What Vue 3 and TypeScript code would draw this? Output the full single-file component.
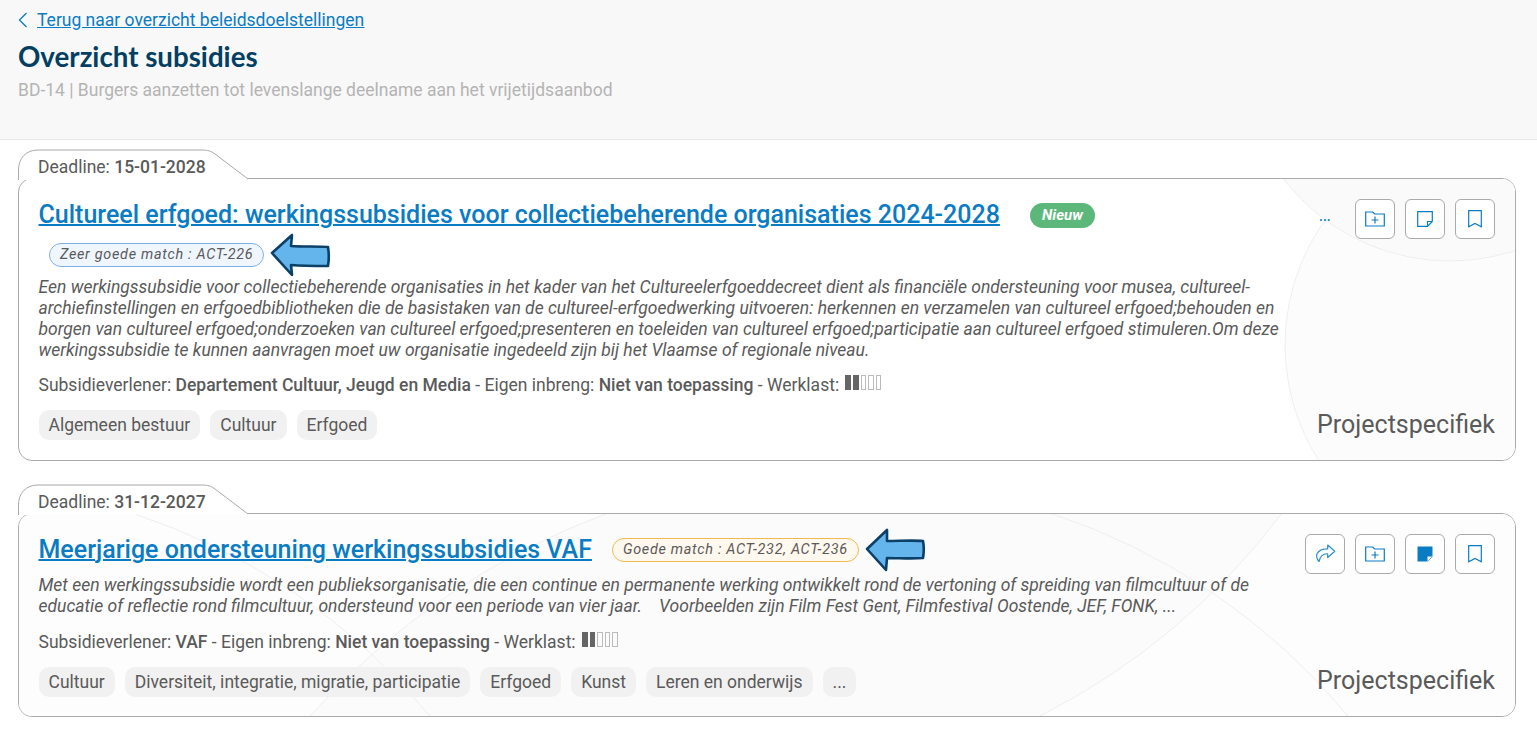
<script setup lang="ts">
interface Card {
  deadline: string
  title: string
  isNew?: boolean
  match: { text: string; kind: string }
  desc: string[]
  giver: string
  tags: string[]
  filledNote?: boolean
  share?: boolean
}
const cards: Card[] = [
  {
    deadline: '15-01-2028',
    title: 'Cultureel erfgoed: werkingssubsidies voor collectiebeherende organisaties 2024-2028',
    isNew: true,
    match: { text: 'Zeer goede match : ACT-226', kind: 'blue' },
    desc: [
      'Een werkingssubsidie voor collectiebeherende organisaties in het kader van het Cultureelerfgoeddecreet dient als financiële ondersteuning voor musea, cultureel-',
      'archiefinstellingen en erfgoedbibliotheken die de basistaken van de cultureel-erfgoedwerking uitvoeren: herkennen en verzamelen van cultureel erfgoed;behouden en',
      'borgen van cultureel erfgoed;onderzoeken van cultureel erfgoed;presenteren en toeleiden van cultureel erfgoed;participatie aan cultureel erfgoed stimuleren.Om deze',
      'werkingssubsidie te kunnen aanvragen moet uw organisatie ingedeeld zijn bij het Vlaamse of regionale niveau.',
    ],
    giver: 'Departement Cultuur, Jeugd en Media',
    tags: ['Algemeen bestuur', 'Cultuur', 'Erfgoed'],
  },
  {
    deadline: '31-12-2027',
    title: 'Meerjarige ondersteuning werkingssubsidies VAF',
    match: { text: 'Goede match : ACT-232, ACT-236', kind: 'orange' },
    desc: [
      'Met een werkingssubsidie wordt een publieksorganisatie, die een continue en permanente werking ontwikkelt rond de vertoning of spreiding van filmcultuur of de',
      'educatie of reflectie rond filmcultuur, ondersteund voor een periode van vier jaar.\u00a0\u00a0\u00a0 Voorbeelden zijn Film Fest Gent, Filmfestival Oostende, JEF, FONK, ...',
    ],
    giver: 'VAF',
    tags: ['Cultuur', 'Diversiteit, integratie, migratie, participatie', 'Erfgoed', 'Kunst', 'Leren en onderwijs', '...'],
    filledNote: true,
    share: true,
  },
]
</script>

<template>
  <div class="page">
    <header class="head">
      <a class="back" href="#">
        <svg class="chev" width="10" height="16" viewBox="0 0 10 16"><path d="M8.500 1 1.500 8l7 7" fill="none" stroke="#0a7cc4" stroke-width="1.300" /></svg>
        <span>Terug naar overzicht beleidsdoelstellingen</span>
      </a>
      <h1>Overzicht subsidies</h1>
      <p class="sub">BD-14 | Burgers aanzetten tot levenslange deelname aan het vrijetijdsaanbod</p>
    </header>

    <main class="list">
      <article v-for="(c, i) in cards" :key="i" class="item">
        <div class="tab">
          <svg class="tabshape" width="232" height="31" viewBox="0 0 232 31">
            <path d="M.5 31V21C.5 9 8 1 20 1H183C190 1 193 2 197 5L230 30" fill="#fff" stroke="#aaa" stroke-width="1" />
          </svg>
          <span class="tabtext">Deadline: <b>{{ c.deadline }}</b></span>
        </div>
        <div class="card" :class="{ second: c.share }">
          <svg v-if="!c.share" class="bg" width="1498" height="283" viewBox="0 0 1498 283">
            <circle cx="1482" cy="167" r="215" fill="#fcfcfc" stroke="#eee" />
            <circle cx="1432" cy="-127" r="210" fill="#fafafa" stroke="#eee" />
          </svg>
          <svg v-else class="bg" width="1498" height="204" viewBox="0 0 1498 204">
            <rect width="1498" height="204" fill="#fdfdfd" />
            <path d="M590 0A750 750 0 0 0 292 203H1022A700 700 0 0 0 1264 0Z" fill="#fbfbfb" />
            <path d="M590 0A750 750 0 0 0 292 203M1264 0A700 700 0 0 1 1022 203M1032 0A650 650 0 0 1 1330 203M114 0A650 650 0 0 1 412 203" fill="none" stroke="#eee" />
          </svg>

          <div class="main">
            <div class="titlerow">
              <a class="title" href="#">{{ c.title }}</a>
              <span v-if="c.isNew" class="new">Nieuw</span>
              <template v-if="c.share">
                <span class="match" :class="c.match.kind">{{ c.match.text }}</span>
                <svg class="arrow" width="62" height="44" viewBox="0 0 62 44"><path d="M2 21 22 2v11c12 0 26-1 36 0 1 5 1 11 0 17-12 1-24 0-36 0l-1 12z" fill="#64b5ec" stroke="#0b4068" stroke-width="2.600" stroke-linejoin="round" /></svg>
              </template>
            </div>
            <div v-if="!c.share" class="matchrow">
              <span class="match" :class="c.match.kind">{{ c.match.text }}</span>
              <svg class="arrow" width="62" height="44" viewBox="0 0 62 44"><path d="M2 20 22 2l-1 11c12 1 26 0 37 1 1 6 1 13 0 19-12 0-25 0-37-1l1 10z" fill="#64b5ec" stroke="#0b4068" stroke-width="2.600" stroke-linejoin="round" /></svg>
            </div>
            <p class="desc"><span v-for="(l, n) in c.desc" :key="n" class="line">{{ l }}</span></p>
            <p class="meta">
              Subsidieverlener: <b>{{ c.giver }}</b> - Eigen inbreng: <b>Niet van toepassing</b> - Werklast:
              <span class="load"><i class="on" /><i class="on" /><i /><i /><i /></span>
            </p>
            <div class="tags"><span v-for="t in c.tags" :key="t" class="tag">{{ t }}</span></div>
          </div>

          <div class="side">
            <div class="actions">
              <span v-if="!c.share" class="dots">...</span>
              <button v-if="c.share" class="btn" type="button">
                <svg width="22" height="20" viewBox="0 0 22 20"><path d="M13.700 1 20.800 7.300 13.700 13.500V9.800C9.500 9.500 6.500 11 5 17.500 .5 12.500 2 5 13.700 4.800Z" fill="none" stroke="#2a8fd0" stroke-width="1.200" stroke-linejoin="round" /></svg>
              </button>
              <button class="btn" type="button">
                <svg width="20" height="16" viewBox="0 0 20 16"><path d="M.7 1h7l2 2h9.600v12H.7zM10 5.500v7M6.500 9h7" fill="none" stroke="#0a7cc4" stroke-width="1.200" /></svg>
              </button>
              <button class="btn" type="button">
                <svg v-if="c.filledNote" width="16" height="16" viewBox="0 0 16 16"><path d="M.5.500H15.500V10.500H10.500V15.500H.5Z" fill="#0a7cc4" /><path d="M15.500 10.500 10.500 15.500" stroke="#7ab8e2" stroke-width="1" /></svg>
                <svg v-else width="16" height="16" viewBox="0 0 16 16"><path d="M.7.700h14.600v9.800l-4.800 4.800H.7zM15 10.500h-4.500V15" fill="none" stroke="#0a7cc4" stroke-width="1.200" /></svg>
              </button>
              <button class="btn" type="button">
                <svg width="14" height="18" viewBox="0 0 14 18"><path d="M.7.700h12.600v16L7 13.500.7 16.700z" fill="none" stroke="#0a7cc4" stroke-width="1.200" /></svg>
              </button>
            </div>
            <div class="kind">Projectspecifiek</div>
          </div>
        </div>
      </article>
    </main>
  </div>
</template>

<style>
html, body { margin: 0; background: #fff; }
</style>

<style scoped>
.page { width: 1537px; height: 730px; overflow: hidden; font-family: Roboto, sans-serif; color: #5a5a5a; }
.head { height: 140px; box-sizing: border-box; padding: 8px 18px 0; background: #f8f8f8; border-bottom: 1px solid #e8e8e8; }
.back { display: flex; align-items: center; gap: 9px; font-size: 17.5px; line-height: 24px; color: #0a7cc4; }
.back span { text-decoration: underline; }
.chev { flex: none; }
h1 { margin: 8px 0 0; font: 700 27.700px/34px Lato, sans-serif; color: #023f62; }
.sub { margin: 4px 0 0; font-size: 17.5px; line-height: 24px; color: #b4b4b4; }
.list { padding: 9px 21px 0 18px; display: flex; flex-direction: column; gap: 23px; }
.item { position: relative; }
.tab { position: relative; height: 30px; z-index: 1; margin-bottom: -1px; }
.tabshape { position: absolute; left: 0; top: 0; }
.tabtext { position: absolute; left: 20px; top: 6px; font-size: 17.5px; line-height: 24px; }
.tabtext b { font-weight: 500; }
.card { position: relative; box-sizing: border-box; border: 1px solid #aaa; border-radius: 14px; height: 283px; display: flex; overflow: hidden; background: #fff; }
.card.second { height: 204px; }
.bg { position: absolute; left: -1px; top: -1px; }
.main { position: relative; flex: 1; min-width: 0; padding: 18px 0 0 19.500px; }
.titlerow { display: flex; align-items: center; height: 36px; }
.title { font-size: 25px; font-weight: 500; line-height: 36px; color: #0a7cc4; text-decoration: underline; text-decoration-thickness: 2px; white-space: nowrap; }
.new { margin-left: 30px; width: 65px; height: 25px; border-radius: 13px; background: #5cb87a; color: #fff; font-size: 15px; font-weight: 700; font-style: italic; line-height: 25px; text-align: center; }
.matchrow { display: flex; align-items: center; box-sizing: border-box; height: 43px; padding-bottom: 2px; margin: 1px 0 0 10.500px; }
.match { box-sizing: border-box; height: 24px; line-height: 22px; padding: 0 10px; border: 1px solid; border-radius: 12px; font-size: 14.400px; font-style: italic; letter-spacing: .7px; white-space: nowrap; }
.match.blue { background: #eff6ff; border-color: #7fb0ee; }
.match.orange { background: #fff8ee; border-color: #f5b94f; margin-left: 20px; }
.arrow { flex: none; margin-left: 6px; }
.desc { margin: 0; font-size: 17.5px; line-height: 21px; font-style: italic; white-space: nowrap; }
.second .desc { margin-top: 7px; }
.line { display: block; }
.meta { margin: 12px 0 0; font-size: 17.5px; line-height: 24px; white-space: nowrap; }
.second .meta { margin-top: 13px; }
.meta b { font-weight: 500; }
.load { display: inline-flex; gap: 2px; margin-left: 2px; vertical-align: 1px; }
.load i { width: 5.600px; height: 15px; box-sizing: border-box; border: 1px solid #bbb; }
.load i.on { background: #666; border-color: #666; }
.tags { display: flex; gap: 10px; margin-top: 13px; }
.tag { height: 30px; line-height: 30px; padding: 0 10px; border-radius: 10px; background: #f1f1f1; font-size: 17.5px; }
.side { position: relative; width: 215px; flex: none; padding: 20px 20px 20px 0; box-sizing: border-box; display: flex; flex-direction: column; align-items: flex-end; justify-content: space-between; }
.actions { display: flex; align-items: center; gap: 10px; position: relative; }
.btn { width: 40px; height: 40px; padding: 0; display: flex; align-items: center; justify-content: center; background: #fff; border: 1px solid #aaa; border-radius: 6px; }
.dots { position: absolute; left: -36px; top: 9px; color: #0a7cc4; font-size: 14px; font-weight: 500; }
.kind { font-size: 25px; line-height: 30px; }
</style>
